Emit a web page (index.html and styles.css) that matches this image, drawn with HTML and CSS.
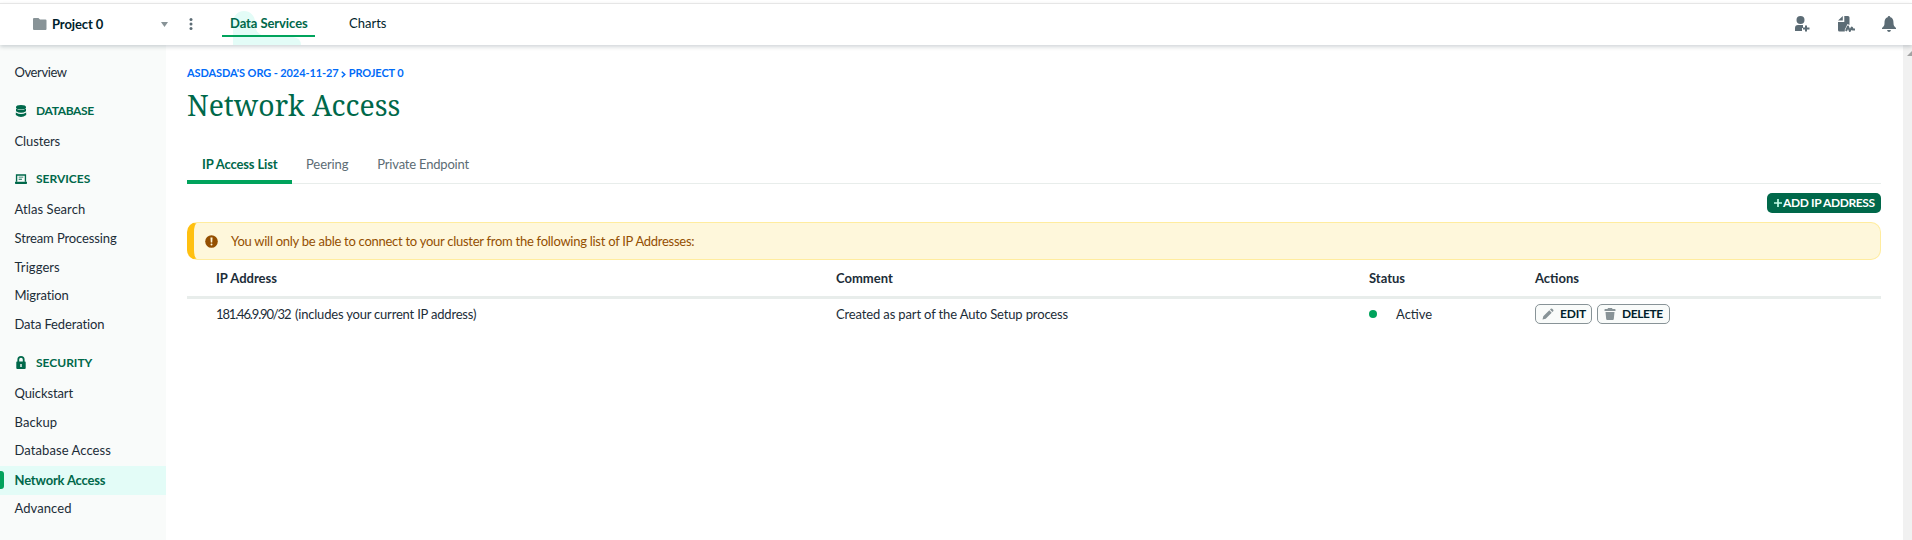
FILE: index.html
```html
<!DOCTYPE html>
<html lang="en">
<head>
<meta charset="utf-8">
<title>Network Access</title>
<link rel="stylesheet" href="styles.css">
</head>
<body>
<header class="topbar">
  <div class="project">
    <svg class="folder" width="14" height="12" viewBox="0 0 14 12"><path fill="#889397" d="M1 0h4.500l1.500 1.500h5.500a1 1 0 0 1 1 1V11a1 1 0 0 1-1 1H1a1 1 0 0 1-1-1V1a1 1 0 0 1 1-1z"/></svg>
    <b class="project-name">Project 0</b>
    <svg class="caret" width="7" height="5" viewBox="0 0 7 5"><path fill="#889397" d="M0 0h7L3.500 5z"/></svg>
    <svg class="dots" width="4" height="12" viewBox="0 0 4 12"><g fill="#5c6c75"><circle cx="2" cy="1.600" r="1.500"/><circle cx="2" cy="6" r="1.500"/><circle cx="2" cy="10.400" r="1.500"/></g></svg>
  </div>
  <nav class="services">
    <a class="service active"><svg class="blob" width="68" height="34" viewBox="0 0 68 34"><path fill="#e3fcf7" d="M0 34V11a11 11 0 0 1 22 0v2q0 10 10 12l28 1q8 1 8 8z"/></svg><span>Data Services</span></a>
    <a class="service charts">Charts</a>
  </nav>
  <div class="tools">
    <svg width="15" height="16" viewBox="0 0 15 16"><g fill="#5c6c75"><circle cx="5.500" cy="4" r="4"/><path d="M0 15v-3a3 3 0 0 1 3-3h5v3H7v3z"/><path d="M10 9.500h2v2h2.500v2H12v2h-2v-2H8v-2h2z"/></g></svg>
    <svg width="17" height="16" viewBox="0 0 17 16"><path fill="#5c6c75" d="M4.800 0v4.500H0zM6.300 0H10a1.500 1.500 0 0 1 1.500 1.500V9L9.500 8 6.800 13.500v2H1.500A1.500 1.500 0 0 1 0 14V6h6.300z"/><path fill="none" stroke="#5c6c75" stroke-width="2" stroke-linejoin="round" d="M8 15l2-4.500 1.800 4.500 2-3.500 1 2H17"/></svg>
    <svg width="14" height="16" viewBox="0 0 14 16"><path fill="#5c6c75" d="M7 0q1.200 0 1.300 1.300C11 2 11.500 4.500 11.500 7c0 2 .5 3.500 2.500 5v1H0v-1c2-1.500 2.500-3 2.500-5 0-2.500.5-5 3.200-5.700Q5.800 0 7 0zM5 14h4q-.5 2-2 2t-2-2z"/></svg>
  </div>
</header>
<div class="body">
  <aside class="sidebar">
    <a class="item tight">Overview</a>
    <h2 class="group tight"><svg width="12" height="12" viewBox="0 0 12 12"><g fill="#00684a"><ellipse cx="6" cy="2.200" rx="5" ry="2.200"/><path d="M1 3.500q5 3 10 0v2.700q-5 3-10 0zM.8 7.500q5.200 3 10.400 0V10Q6 14 .8 10z"/></g></svg>DATABASE</h2>
    <a class="item">Clusters</a>
    <h2 class="group"><svg width="13" height="12" viewBox="0 0 13 12"><path fill="none" stroke="#00684a" stroke-width="1.500" d="M1.700 9V1.700h9.600V9"/><path fill="#00684a" d="M0 9h13v1.500q0 .8-.8.800H.8Q0 11.300 0 10.500zM4 3.500h5v1H4zM4 5.800h3.500v1H4z"/></svg>SERVICES</h2>
    <a class="item wide">Atlas Search</a>
    <a class="item">Stream Processing</a>
    <a class="item wide">Triggers</a>
    <a class="item">Migration</a>
    <a class="item">Data Federation</a>
    <h2 class="group"><svg width="12" height="13" viewBox="0 0 12 13"><path fill="none" stroke="#00684a" stroke-width="1.800" d="M3.300 6V3.600a2.700 2.700 0 0 1 5.400 0V6"/><path fill="#00684a" fill-rule="evenodd" d="M2 5.500h8q.7 0 .7.700V12q0 1-1 1H2.300q-1 0-1-1V6.200q0-.7.7-.7zM5.300 8v3h1.400V8z"/></svg>SECURITY</h2>
    <a class="item">Quickstart</a>
    <a class="item wide">Backup</a>
    <a class="item wide">Database Access</a>
    <a class="item current">Network Access</a>
    <a class="item wide">Advanced</a>
  </aside>
  <main class="main">
    <div class="crumbs">ASDASDA'S ORG - 2024-11-27 <svg class="chevron" width="5" height="7" viewBox="0 0 5 7"><path fill="none" stroke="#016bf8" stroke-width="1.500" d="M.8.700L3.800 3.500.8 6.300"/></svg> PROJECT 0</div>
    <h1 class="title">Network Access</h1>
    <nav class="tabs">
      <a class="tab selected">IP Access List</a>
      <a class="tab peering">Peering</a>
      <a class="tab endpoint">Private Endpoint</a>
    </nav>
    <div class="actions"><button class="add"><svg width="8" height="8" viewBox="0 0 8 8"><path stroke="#c0fae6" stroke-width="1.700" d="M4 0v8M0 4h8"/></svg>ADD IP ADDRESS</button></div>
    <div class="notice">
      <svg width="13" height="13" viewBox="0 0 13 13"><circle cx="6.500" cy="6.500" r="6.300" fill="#944f01"/><path fill="#fef7db" d="M5.500 2.500h2L7.200 7.500H5.800z"/><circle cx="6.500" cy="9.500" r="1" fill="#fef7db"/></svg>
      <span class="notice-text">You will only be able to connect to your cluster from the following list of IP Addresses:</span>
    </div>
    <div class="row head"><div>IP Address</div><div>Comment</div><div>Status</div><div>Actions</div></div>
    <div class="row entry">
      <div class="ip"><span class="cidr">181.46.9.90/32</span><span class="own">(includes your current IP address)</span></div>
      <div class="comment">Created as part of the Auto Setup process</div>
      <div class="status"><i class="dot"></i>Active</div>
      <div class="buttons">
        <button class="btn"><svg width="12" height="12" viewBox="0 0 12 12"><path fill="#889397" d="M8.800.8q.7-.7 1.400 0l1 1q.7.700 0 1.400l-.8.800L8 1.600zM7.300 2.300l2.400 2.400-6 6L.5 11.500l.8-3.200z"/></svg>EDIT</button>
        <button class="btn delete"><svg width="12" height="12" viewBox="0 0 12 12"><path fill="#889397" d="M4 0h4l.5 1H11q.5 0 .5 1v1H.5V2q0-1 .5-1h2.500zM1.500 4h9l-.7 7q-.1 1-1 1H3.200q-.9 0-1-1z"/></svg>DELETE</button>
      </div>
    </div>
  </main>
  <div class="scrollbar"><svg width="9" height="6" viewBox="0 0 9 6"><path fill="#a3a3a3" d="M4 5l5-5h4L18 5z"/></svg></div>
</div>
</body>
</html>
```
FILE: styles.css
```css
* { box-sizing: border-box; }
body { margin: 0; height: 540px; overflow: hidden; background: #fff; color: #1c2d38; font: 13px/18px Lato, sans-serif; }
svg { display: block; flex: none; }
button { font: inherit; margin: 0; }
.topbar { position: relative; z-index: 1; display: flex; height: 42px; margin-top: 3px; border-top: 1px solid #e6e6e6; background: #fff; box-shadow: 0 2px 4px rgba(0, 30, 43, .18); }
.project { display: flex; align-items: center; width: 222px; padding: 0 0 1px 33px; }
.project-name { width: 109px; margin-left: 5px; color: #001e2b; letter-spacing: -.1px; }
.caret { margin: 1px 21px 0 0; }
.services { display: flex; padding-top: 10px; }
.service { position: relative; height: 23px; color: #001e2b; }
.service.active { width: 93px; padding-left: 8px; border-bottom: 2px solid #00a35c; color: #00684a; font-weight: 700; letter-spacing: -.08px; }
.service.active span { position: relative; }
.blob { position: absolute; left: 11px; top: -3px; z-index: -1; }
.charts { margin-left: 34px; }
.tools { display: flex; gap: 28px; margin-left: auto; padding: 12px 16px 0 0; }
.tools svg:nth-child(2) { margin-right: -1px; }
.body { display: flex; height: 495px; }
.sidebar { width: 166px; padding-top: 14px; background: #f9fbfa; }
.item { display: block; height: 28.700px; padding-left: 14.500px; line-height: 27px; color: #1c2d38; letter-spacing: -.12px; }
.item.wide { letter-spacing: .08px; }
.item.tight { letter-spacing: -.4px; }
.item.current { position: relative; background: #e3fcf7; color: #00684a; font-weight: 700; letter-spacing: -.18px; line-height: 28px; }
.current::before { content: ""; position: absolute; left: 0; top: 5px; width: 4px; height: 18px; border-radius: 0 3px 3px 0; background: #00a35c; }
.group { display: flex; align-items: center; gap: 9px; height: 40px; margin: 0; padding: 6px 0 0 15px; color: #00684a; font: 700 12px/18px Lato, sans-serif; }
.group.tight { letter-spacing: -.35px; }
.group svg { width: 12px; }
.main { flex: 1; padding: 19px 22px 0 21px; }
.crumbs { height: 18px; color: #016bf8; font-size: 11px; font-weight: 700; letter-spacing: -.1px; }
.chevron { display: inline-block; vertical-align: -1px; }
.title { margin: 6px 0 0; height: 36px; color: #00684a; font: 400 28.400px/35px "Noto Serif", "Liberation Serif", serif; }
.tabs { display: flex; height: 45px; margin-top: 15px; border-bottom: 1px solid #e8edeb; color: #5c6c75; line-height: 50px; }
.tab.selected { width: 105px; height: 45px; padding-left: 15px; border-bottom: 4px solid #00a35c; border-radius: 3px 3px 0 0; color: #00684a; font-weight: 700; letter-spacing: -.15px; }
.peering { margin-left: 14px; letter-spacing: -.1px; }
.endpoint { margin-left: 29px; letter-spacing: -.2px; }
.actions { display: flex; justify-content: flex-end; height: 38px; padding-top: 9px; }
.add { display: flex; align-items: center; gap: 1px; width: 114px; height: 20px; padding: 0 6px 1px 7px; border: 0; border-radius: 5px; background: #00684a; color: #fff; font-size: 12px; font-weight: 700; letter-spacing: -.38px; white-space: nowrap; }
.notice { display: flex; align-items: center; gap: 13px; height: 38px; padding-left: 11px; border: 1px solid #ffec9e; border-left: 7px solid #ffc010; border-radius: 10px; background: #fef7db; color: #944f01; }
.notice-text { letter-spacing: -.27px; }
.row { display: grid; grid-template-columns: 620px 533px 166px 1fr; padding-left: 29px; }
.head { height: 39px; padding-top: 9px; border-bottom: 3px solid #e8edeb; font-weight: 700; }
.entry { padding-top: 5px; line-height: 20px; }
.cidr { display: inline-block; width: 79px; letter-spacing: -1.150px; }
.own { letter-spacing: -.2px; }
.comment { letter-spacing: -.14px; }
.status { display: flex; align-items: center; gap: 19px; }
.dot { width: 8px; height: 8px; border-radius: 50%; background: #00a35c; }
.buttons { display: flex; gap: 5px; }
.btn { display: flex; align-items: center; gap: 6px; width: 57px; height: 20px; padding: 0 6px 1px; border: 1px solid #889397; border-radius: 5px; background: #f9fbfa; color: #001e2b; font-size: 12px; font-weight: 700; letter-spacing: -.2px; }
.delete { width: 73px; letter-spacing: -.4px; }
.scrollbar { width: 9px; padding-top: 6px; background: #f1f1f1; overflow: hidden; }
```
